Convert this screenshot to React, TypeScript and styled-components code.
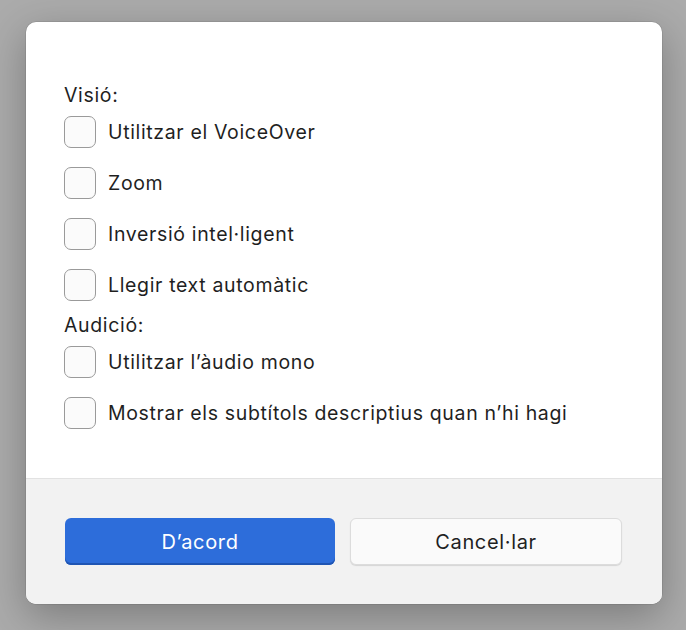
import React from 'react';
import styled, {createGlobalStyle} from "styled-components";

const GlobalStyle = createGlobalStyle`
    body {
        margin: 0;
        background-color: #ababab;
        font-family: Inter, "Liberation Sans", sans-serif;
        letter-spacing: 0.65px;
    }
`;

const Page = styled.div`
    width: 686px;
    height: 630px;
    padding: 22px 0 0 26px;
    box-sizing: border-box;
`;

const Dialog = styled.div`
    width: 636px;
    height: 582px;
    background-color: white;
    border-radius: 10px;
    overflow: hidden;
    display: flex;
    flex-direction: column;
    box-shadow: 0 12px 40px rgba(0, 0, 0, 0.28), 0 0 0 0.5px rgba(0, 0, 0, 0.15);
`;

const Content = styled.div`
    flex: 1;
    padding: 61px 38px 0 38px;
    display: flex;
    flex-direction: column;
    gap: 12px;
`;

const Section = styled.div`
    display: flex;
    flex-direction: column;
    gap: 19px;
`;

const SectionLabel = styled.div`
    font-size: 19.5px;
    line-height: 24px;
    color: #1f1f1f;
    margin-bottom: -10px;
`;

const Row = styled.label`
    display: flex;
    align-items: center;
    gap: 12px;
    height: 32px;
    font-size: 19.5px;
    color: #1f1f1f;
`;

const Box = styled.span`
    width: 32px;
    height: 32px;
    box-sizing: border-box;
    border: 1.5px solid #9a9a9a;
    border-radius: 7px;
    background-color: #fbfbfb;
    flex-shrink: 0;
`;

const Footer = styled.div`
    height: 126px;
    box-sizing: border-box;
    border-top: 1px solid #e2e2e2;
    background-color: #f2f2f2;
    padding: 39px 40px 0 39px;
    display: flex;
    gap: 15px;
    align-items: flex-start;
`;

const Button = styled.button<{ $primary?: boolean }>`
    flex: 1;
    height: 47px;
    border-radius: 6px;
    font-family: Inter, "Liberation Sans", sans-serif;
    font-size: 20px;
    letter-spacing: 0.65px;
    cursor: pointer;
    border: ${p => p.$primary ? '0' : '1px solid #dcdcdc'};
    background-color: ${p => p.$primary ? '#2d6dda' : '#fafafa'};
    color: ${p => p.$primary ? 'white' : '#1f1f1f'};
    box-shadow: ${p => p.$primary ? 'inset 0 -2px 0 #1f55b3' : '0 1px 1px rgba(0,0,0,0.12)'};
`;

const visionOptions = [
    'Utilitzar el VoiceOver',
    'Zoom',
    'Inversió intel·ligent',
    'Llegir text automàtic',
];

const audioOptions = [
    'Utilitzar l’àudio mono',
    'Mostrar els subtítols descriptius quan n’hi hagi',
];

function OptionSection(props: { title: string, options: Array<string> }) {
    return <Section>
        <SectionLabel>{props.title}</SectionLabel>
        {props.options.map((option, index) => <Row key={index}>
            <Box/>{option}
        </Row>)}
    </Section>;
}

function App() {
    return <Page>
        <GlobalStyle/>
        <Dialog>
            <Content>
                <OptionSection title={'Visió:'} options={visionOptions}/>
                <OptionSection title={'Audició:'} options={audioOptions}/>
            </Content>
            <Footer>
                <Button $primary>D’acord</Button>
                <Button>Cancel·lar</Button>
            </Footer>
        </Dialog>
    </Page>;
}

export default App;
